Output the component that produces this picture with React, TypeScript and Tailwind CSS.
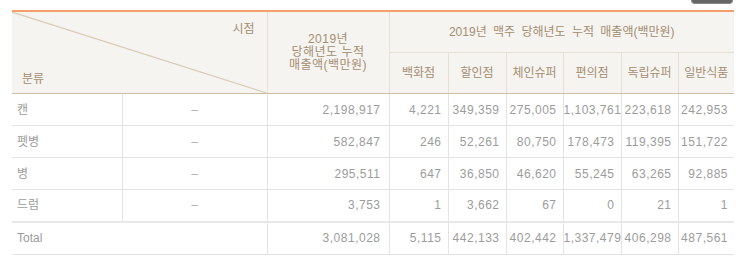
import React from 'react'

const channels = ['백화점', '할인점', '체인슈퍼', '편의점', '독립슈퍼', '일반식품']

const rows = [
  { name: '캔', total: '2,198,917', values: ['4,221', '349,359', '275,005', '1,103,761', '223,618', '242,953'] },
  { name: '펫병', total: '582,847', values: ['246', '52,261', '80,750', '178,473', '119,395', '151,722'] },
  { name: '병', total: '295,511', values: ['647', '36,850', '46,620', '55,245', '63,265', '92,885'] },
  { name: '드럼', total: '3,753', values: ['1', '3,662', '67', '0', '21', '1'] },
]

const totalRow = { total: '3,081,028', values: ['5,115', '442,133', '402,442', '1,337,479', '406,298', '487,561'] }

const font = { fontFamily: '"Liberation Sans", "Noto Sans CJK KR", sans-serif' }

export default function App() {
  return (
    <div className="w-[745px] h-[269px] bg-white overflow-hidden text-[12px]" style={font}>
      <div className="flex justify-end pr-[12px]">
        <div className="w-[42px] h-[4px] rounded-b-[4px] bg-[#666666] border border-t-0 border-[#888]" />
      </div>
      <div className="mt-[6px] ml-[12px] w-[722px]">
        <table className="w-full table-fixed border-collapse">
          <colgroup>
            <col className="w-[110px]" />
            <col className="w-[145px]" />
            <col className="w-[122px]" />
            <col className="w-[59px]" />
            <col className="w-[58px]" />
            <col className="w-[57px]" />
            <col className="w-[58px]" />
            <col className="w-[57px]" />
            <col className="w-[56px]" />
          </colgroup>
          <thead className="text-[#a48e72]">
            <tr className="h-[41px] border-t-2 border-[#f5a06a] bg-[#f6f4f0]">
              <th colSpan={2} rowSpan={2} className="relative p-0 font-normal border-b border-[#cdbda6]">
                <svg className="absolute inset-0 w-full h-full" preserveAspectRatio="none" viewBox="0 0 100 100">
                  <line x1="0" y1="0" x2="100" y2="100" stroke="#d9ccb8" strokeWidth="1.2" vectorEffect="non-scaling-stroke" />
                </svg>
                <div className="relative flex flex-col justify-between h-[81px] pt-[10px] pb-[7px] pl-[10px] pr-[12px]">
                  <span className="self-end leading-[14px]">시점</span>
                  <span className="self-start leading-[14px]">분류</span>
                </div>
              </th>
              <th rowSpan={2} className="font-normal border-l border-b border-[#e6dfd4] border-b-[#cdbda6] leading-[13px] tracking-[0.5px]">
                2019년
                <br />
                당해년도 누적
                <br />
                매출액(백만원)
              </th>
              <th colSpan={6} className="font-normal border-l border-b border-[#e6dfd4] [word-spacing:3px]">
                2019년 맥주 당해년도 누적 매출액(백만원)
              </th>
            </tr>
            <tr className="h-[40px] bg-[#f6f4f0]">
              {channels.map((c) => (
                <th key={c} className="font-normal border-b border-[#cdbda6] whitespace-nowrap border-l border-l-[#e6dfd4]">
                  {c}
                </th>
              ))}
            </tr>
          </thead>
          <tbody className="text-[#9c9c9c]">
            {rows.map((r) => (
              <tr key={r.name} className="h-[32px] border-b border-[#e4e4e4]">
                <td className="pl-[5px]">{r.name}</td>
                <td className="text-center text-[#b0b0b0] border-l border-[#e4e4e4]">–</td>
                <td className="text-right pr-[8px] tracking-[0.5px] border-l border-[#e4e4e4]">{r.total}</td>
                {r.values.map((v, i) => (
                  <td key={i} className="text-right pr-[6px] tracking-[0.5px] whitespace-nowrap border-l border-[#e4e4e4]">
                    {v}
                  </td>
                ))}
              </tr>
            ))}
            <tr className="h-[33px] border-t-2 border-t-[#e8e8e8] border-b border-[#e4e4e4]">
              <td colSpan={2} className="pl-[5px]">Total</td>
              <td className="text-right pr-[8px] tracking-[0.5px] border-l border-[#e4e4e4]">{totalRow.total}</td>
              {totalRow.values.map((v, i) => (
                <td key={i} className="text-right pr-[6px] tracking-[0.5px] whitespace-nowrap border-l border-[#e4e4e4]">
                  {v}
                </td>
              ))}
            </tr>
          </tbody>
        </table>
      </div>
    </div>
  )
}
